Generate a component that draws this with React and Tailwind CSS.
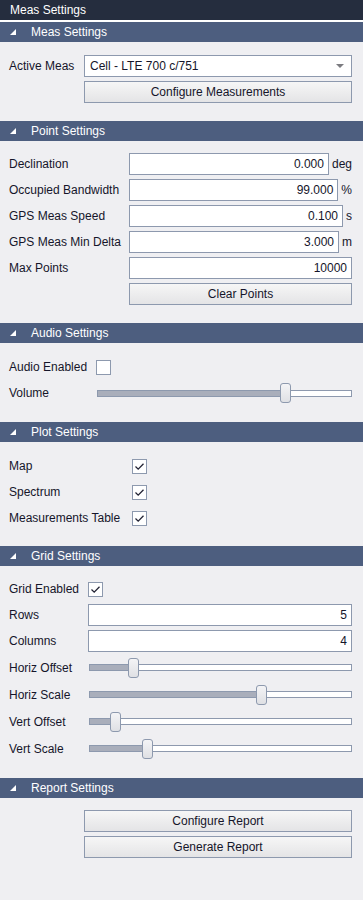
import React from 'react';

const FONT = { fontFamily: '"Liberation Sans", Arial, sans-serif' };

function SectionHeader({ title }) {
  return (
    <div className="flex items-center h-[20px] bg-[#4d5e7f] text-white text-[12px]">
      <svg viewBox="0 0 6 6" className="w-[6px] h-[6px] ml-[10px] mr-[15px] mb-[1px]">
        <polygon points="6,0 6,6 0,6" fill="#ffffff" />
      </svg>
      <span>{title}</span>
    </div>
  );
}

function TextBox({ value }) {
  return (
    <div className="flex-1 h-[22px] bg-white border border-[#8d99ae] flex items-center justify-end pr-[4px]">
      {value}
    </div>
  );
}

function Button({ children }) {
  return (
    <button className="w-full h-[22px] border border-[#8d99ae] bg-gradient-to-b from-[#f6f6f6] to-[#e4e4e6] text-[12px] text-[#15152a]">
      {children}
    </button>
  );
}

function CheckBox({ checked }) {
  return (
    <div className="w-[15px] h-[15px] bg-white border border-[#8d99ae] flex items-center justify-center">
      {checked && (
        <svg viewBox="0 0 11 11" className="w-[11px] h-[11px]">
          <polyline points="1.5,5.5 4.2,8.2 9.5,2.8" fill="none" stroke="#222233" strokeWidth="1.3" />
        </svg>
      )}
    </div>
  );
}

function Slider({ value }) {
  return (
    <div className="relative flex-1 h-full flex items-center">
      <div className="w-full h-[7px] bg-white border border-[#8d99ae] overflow-hidden">
        <div className="h-full bg-[#a9aebb]" style={{ width: `calc(${value} * (100% - 11px) + 5px)` }} />
      </div>
      <div
        className="absolute top-1/2 -translate-y-1/2 w-[11px] h-[20px] rounded-[3px] border border-[#8d99ae] bg-gradient-to-b from-[#f4f4f6] to-[#dfe0e4]"
        style={{ left: `calc(${value} * (100% - 11px))` }}
      />
    </div>
  );
}

function Row({ label, labelW, h = 'h-[22px]', children }) {
  return (
    <div className={`flex items-center ${h}`}>
      <div className={`${labelW} shrink-0`}>{label}</div>
      {children}
    </div>
  );
}

export default function App() {
  return (
    <div className="w-[363px] h-[900px] bg-[#efeff2] text-[12px] text-[#15152a]" style={FONT}>
      <div className="h-[20px] bg-[#252d3e] text-white flex items-center pl-[10px] border-b-2 border-white box-content">
        Meas Settings
      </div>

      <SectionHeader title="Meas Settings" />
      <div className="pl-[9px] pr-[11px] pt-[13px] pb-[18px] flex flex-col gap-[4px]">
        <Row label="Active Meas" labelW="w-[75px]">
          <div className="flex-1 h-[22px] bg-white border border-[#8d99ae] flex items-center justify-between pl-[5px] pr-[7px]">
            <span>Cell - LTE 700 c/751</span>
            <svg viewBox="0 0 8 4" className="w-[8px] h-[4px]">
              <polygon points="0,0 8,0 4,4" fill="#7b7b80" />
            </svg>
          </div>
        </Row>
        <div className="pl-[75px]">
          <Button>Configure Measurements</Button>
        </div>
      </div>

      <SectionHeader title="Point Settings" />
      <div className="pl-[9px] pr-[11px] pt-[12px] pb-[18px] flex flex-col gap-[4px]">
        <Row label="Declination" labelW="w-[120px]">
          <TextBox value="0.000" />
          <span className="ml-[3px]">deg</span>
        </Row>
        <Row label="Occupied Bandwidth" labelW="w-[120px]">
          <TextBox value="99.000" />
          <span className="ml-[3px]">%</span>
        </Row>
        <Row label="GPS Meas Speed" labelW="w-[120px]">
          <TextBox value="0.100" />
          <span className="ml-[3px]">s</span>
        </Row>
        <Row label="GPS Meas Min Delta" labelW="w-[120px]">
          <TextBox value="3.000" />
          <span className="ml-[3px]">m</span>
        </Row>
        <Row label="Max Points" labelW="w-[120px]">
          <TextBox value="10000" />
        </Row>
        <div className="pl-[120px]">
          <Button>Clear Points</Button>
        </div>
      </div>

      <SectionHeader title="Audio Settings" />
      <div className="pl-[9px] pr-[11px] pt-[13px] pb-[18px] flex flex-col gap-[4px]">
        <Row label="Audio Enabled" labelW="w-[87px]">
          <CheckBox checked={false} />
        </Row>
        <Row label="Volume" labelW="w-[88px]">
          <Slider value={0.75} />
        </Row>
      </div>

      <SectionHeader title="Plot Settings" />
      <div className="pl-[9px] pr-[11px] pt-[13px] pb-[17px] flex flex-col gap-[4px]">
        <Row label="Map" labelW="w-[123px]">
          <CheckBox checked />
        </Row>
        <Row label="Spectrum" labelW="w-[123px]">
          <CheckBox checked />
        </Row>
        <Row label="Measurements Table" labelW="w-[123px]">
          <CheckBox checked />
        </Row>
      </div>

      <SectionHeader title="Grid Settings" />
      <div className="pl-[9px] pr-[11px] pt-[12px] pb-[18px] flex flex-col gap-[4px]">
        <Row label="Grid Enabled" labelW="w-[79px]">
          <CheckBox checked />
        </Row>
        <Row label="Rows" labelW="w-[79px]">
          <TextBox value="5" />
        </Row>
        <Row label="Columns" labelW="w-[79px]">
          <TextBox value="4" />
        </Row>
        <Row label="Horiz Offset" labelW="w-[80px]" h="h-[23px]">
          <Slider value={0.155} />
        </Row>
        <Row label="Horiz Scale" labelW="w-[80px]" h="h-[23px]">
          <Slider value={0.663} />
        </Row>
        <Row label="Vert Offset" labelW="w-[80px]" h="h-[23px]">
          <Slider value={0.083} />
        </Row>
        <Row label="Vert Scale" labelW="w-[80px]" h="h-[23px]">
          <Slider value={0.21} />
        </Row>
      </div>

      <SectionHeader title="Report Settings" />
      <div className="pl-[84px] pr-[11px] pt-[12px] flex flex-col gap-[4px]">
        <Button>Configure Report</Button>
        <Button>Generate Report</Button>
      </div>
    </div>
  );
}
